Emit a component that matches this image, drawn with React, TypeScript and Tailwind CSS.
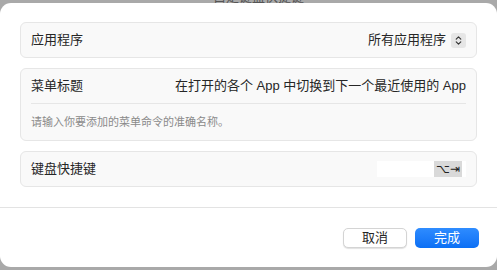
import { ChevronsUpDown } from 'lucide-react'

function Card({ children }: { children: React.ReactNode }) {
    return (
        <div className="rounded-[6px] border border-[#e6e6e6] bg-[#f9f9f9] px-[10px]">
            {children}
        </div>
    )
}

export default function App() {
    return (
        <div
            className="w-[497px] h-[270px] bg-[#a9a9a9] flex flex-col overflow-hidden text-[#262626]"
            style={{ fontFamily: '"Liberation Sans", "Noto Sans CJK SC", sans-serif' }}
        >
            {/* peek of the window title behind the sheet */}
            <div className="h-[3px] overflow-hidden flex justify-center">
                <div className="text-[13px] leading-[13px] text-[#555] -mt-[10px] pl-[20px]">自定键盘快捷键</div>
            </div>
            <div className="flex-1 bg-white rounded-[11px] flex flex-col mb-[3px]">
                <div className="flex flex-col gap-[10px] px-[20px] pt-[19px] pb-[20px]">
                    <Card>
                        <div className="h-[34px] flex items-center justify-between text-[13px]">
                            <span>应用程序</span>
                            <div className="flex items-center gap-[5px]">
                                <span>所有应用程序</span>
                                <span className="w-[15px] h-[15px] rounded-[3px] bg-[#e6e6e6] flex items-center justify-center">
                                    <ChevronsUpDown className="w-[11px] h-[11px] text-[#333]" strokeWidth={2.5} />
                                </span>
                            </div>
                        </div>
                    </Card>
                    <Card>
                        <div className="h-[35px] flex items-center justify-between text-[13px] border-b border-[#e6e6e6]">
                            <span>菜单标题</span>
                            <span>在打开的各个 App 中切换到下一个最近使用的 App</span>
                        </div>
                        <div className="h-[36px] flex items-center text-[11px] text-[#8a8a8a]">
                            请输入你要添加的菜单命令的准确名称。
                        </div>
                    </Card>
                    <Card>
                        <div className="h-[34px] flex items-center justify-between text-[13px]">
                            <span>键盘快捷键</span>
                            <div className="w-[89px] h-[16px] bg-white flex justify-end pr-[4px]">
                                <span className="px-[2px] h-[16px] bg-[#d9d9d9] text-[12px] leading-[16px] text-[#222]">⌥⇥</span>
                            </div>
                        </div>
                    </Card>
                </div>
                <div className="border-t border-[#e3e3e3] flex-1 flex items-start justify-end gap-[8px] px-[18px] pt-[20px]">
                    <button className="w-[64px] h-[20px] rounded-[5px] bg-white border border-[#d4d4d4] shadow-[0_1px_1px_rgba(0,0,0,0.12)] text-[13px] leading-[18px] text-[#262626]">
                        取消
                    </button>
                    <button className="w-[64px] h-[20px] rounded-[5px] bg-gradient-to-b from-[#2e8cff] to-[#0a6ff5] text-[13px] leading-[20px] text-white">
                        完成
                    </button>
                </div>
            </div>
        </div>
    )
}
